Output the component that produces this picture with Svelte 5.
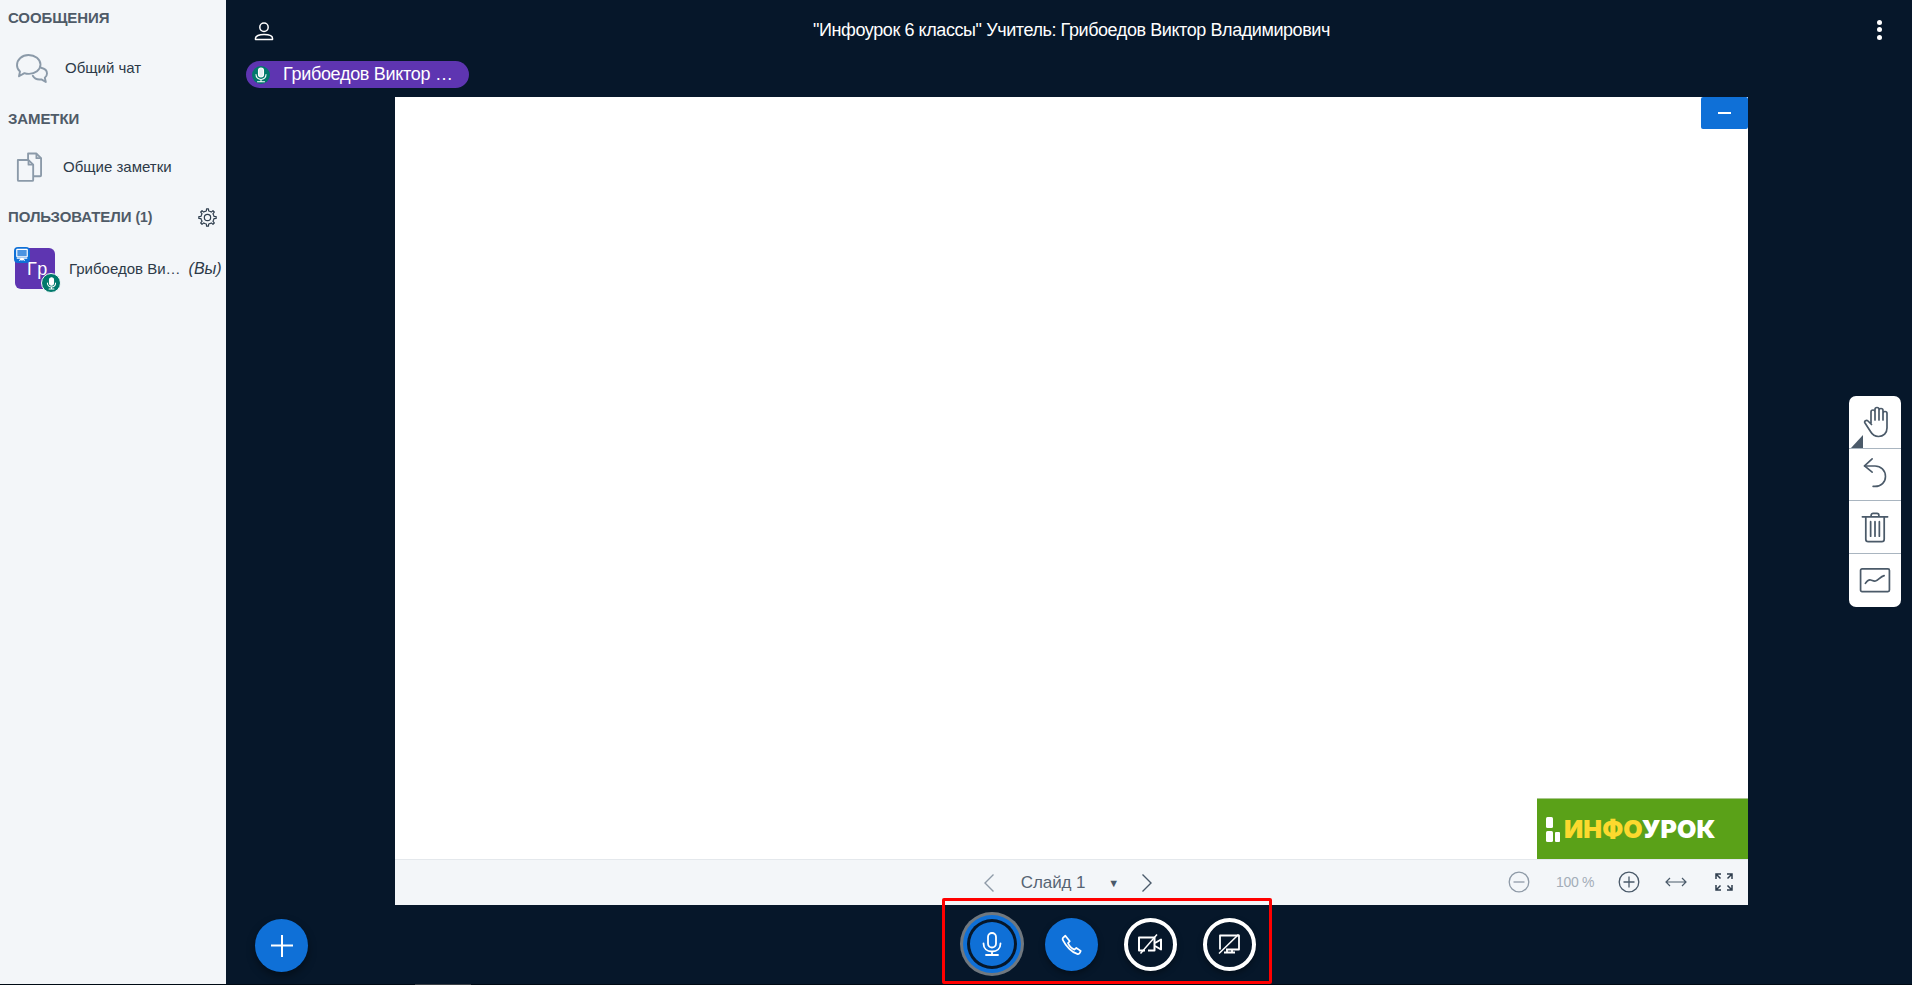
<script>
  function gearPath(cx, cy, ro, ri, n) {
    let d = '';
    const step = (Math.PI * 2) / n;
    for (let i = 0; i < n; i++) {
      const a = i * step - Math.PI / 2;
      const w = step * 0.17;
      const pts = [
        [ri, a - step / 2 + w * 0.3],
        [ri, a - w * 1.35],
        [ro, a - w * 0.8],
        [ro, a + w * 0.8],
        [ri, a + w * 1.35]
      ];
      for (const [r, t] of pts) {
        const x = (cx + r * Math.cos(t)).toFixed(2);
        const y = (cy + r * Math.sin(t)).toFixed(2);
        d += (d ? 'L' : 'M') + x + ' ' + y;
      }
    }
    return d + 'Z';
  }
  const gear = gearPath(12, 12, 11, 8.3, 8);
</script>

<div class="app">
  <aside class="side">
    <h2 class="head first">СООБЩЕНИЯ</h2>
    <div class="item chat">
      <svg class="ic chat-ic" viewBox="0 0 32 32" width="32" height="32" fill="none" stroke="#8b9aa9" stroke-width="1.9" stroke-linejoin="round" stroke-linecap="round">
        <path d="M4 19.500C2 17.800 1 15.600 1 13.200 1 7.500 6 3 12.500 3 19 3 24.500 7.300 24.500 12.600c0 5.400-5.500 9.300-11.500 9.300-1.500 0-3.200-.2-4.600-.8L3 24.200z"/>
        <path d="M25 15.800c3.200.6 6 2.800 6 5.700 0 1.800-.9 3.200-2.200 4.200l1 4.300-4.400-2.600c-3.200.5-7-.8-8.600-3.600"/>
      </svg>
      <span>Общий чат</span>
    </div>
    <h2 class="head notes-head">ЗАМЕТКИ</h2>
    <div class="item notes">
      <svg class="ic" viewBox="0 0 28 32" width="26" height="32" fill="none" stroke="#8b9aa9" stroke-width="2" stroke-linejoin="round">
        <path d="M2 8.500h11.500l5 5V30a1 1 0 0 1-1 1H3a1 1 0 0 1-1-1z"/>
        <path d="M13 8.500V1.500h9l5 5v18.500a1 1 0 0 1-1 1h-7.500"/>
        <path d="M13.500 8.500v5h5M22 1.500v5h5"/>
      </svg>
      <span>Общие заметки</span>
    </div>
    <div class="users-head">
      <h2 class="head">ПОЛЬЗОВАТЕЛИ <small>(1)</small></h2>
      <svg viewBox="0 0 24 24" width="19" height="19" fill="none" stroke="#2f3e4e" stroke-width="1.500" stroke-linejoin="round">
        <path d={gear}/>
        <circle cx="12" cy="12" r="4"/>
      </svg>
    </div>
    <div class="user">
      <div class="avatar">
        <span class="init">Гр</span>
        <span class="presenter">
          <svg viewBox="0 0 16 16" width="14" height="14" fill="none" stroke="#fff" stroke-width="1.300"><rect x="2" y="1.500" width="12" height="8.500" rx=".5" fill="#fff" fill-opacity=".25"/><path d="M2 11.500h12M8 11.500v3M5 14.500l3-3 3 3"/></svg>
        </span>
        <span class="voice">
          <svg viewBox="0 0 16 16" width="13" height="13" fill="none" stroke="#fff" stroke-width="1.300" stroke-linecap="round"><rect x="5.500" y="1" width="5" height="9" rx="2.500" fill="#fff"/><path d="M3 7.500c0 3 2.200 4.800 5 4.800s5-1.800 5-4.800M8 12.300v2M5 14.700h6"/></svg>
        </span>
      </div>
      <span class="uname">Грибоедов Ви…</span>
      <em>(Вы)</em>
    </div>
  </aside>

  <main class="main">
    <header class="top">
      <svg class="person" viewBox="0 0 20 20" width="20" height="20" fill="none" stroke="#fff" stroke-width="1.500" stroke-linejoin="round">
        <circle cx="10" cy="6.300" r="4.200"/>
        <path d="M1.500 18.500v-1.200c0-2.400 3.600-3.800 8.500-3.800s8.500 1.400 8.500 3.800v1.200z"/>
      </svg>
      <div class="title">"Инфоурок 6 классы" Учитель: Грибоедов Виктор Владимирович</div>
      <div class="dots"><i></i><i></i><i></i></div>
    </header>
    <div class="talkers">
      <div class="talker">
        <span class="tmic">
          <svg viewBox="0 0 16 16" width="16" height="16" fill="none" stroke="#fff" stroke-width="1.100" stroke-linecap="round"><rect x="5.500" y="1" width="5" height="9" rx="2.500" fill="#dfeef0"/><path d="M3 7.500c0 3.200 2.200 5 5 5s5-1.800 5-5M8 12.500v2M4.500 14.800h7"/></svg>
        </span>
        <span>Грибоедов Виктор …</span>
      </div>
    </div>

    <section class="stage">
      <div class="slide">
        <button class="min" aria-label="Свернуть"><i></i></button>
        <div class="canvas">
          <div class="logo">
            <svg viewBox="0 0 14 25" width="14" height="25" fill="#fff"><rect x="0" y="0" width="7" height="11" rx="1.500"/><rect x="0" y="14" width="7" height="11" rx="1.500"/><rect x="9" y="15" width="5" height="10" rx="1"/></svg>
            <span class="lg"><b class="y">ИНФО</b><b>УРОК</b></span>
          </div>
        </div>
        <div class="bar">
          <div class="pager">
            <svg viewBox="0 0 14 20" width="14" height="20" fill="none" stroke="#8e9aa7" stroke-width="1.400"><path d="M11.500 1.500 3 10l8.500 8.500"/></svg>
            <span class="sl">Слайд 1</span>
            <span class="caret">▼</span>
            <svg viewBox="0 0 14 20" width="14" height="20" fill="none" stroke="#4a5a6a" stroke-width="1.400"><path d="M2.500 1.500 11 10l-8.500 8.500"/></svg>
          </div>
          <div class="zoomc">
            <svg viewBox="0 0 22 22" width="22" height="22" fill="none" stroke="#8e9aa7" stroke-width="1.300"><circle cx="11" cy="11" r="9.800"/><path d="M5.500 11h11"/></svg>
            <span class="pct">100 %</span>
            <svg viewBox="0 0 22 22" width="22" height="22" fill="none" stroke="#4a5a6a" stroke-width="1.300"><circle cx="11" cy="11" r="9.800"/><path d="M5.500 11h11M11 5.500v11"/></svg>
            <svg class="fit" viewBox="0 0 22 12" width="22" height="12" fill="none" stroke="#4a5a6a" stroke-width="1.200"><path d="M1 6h20M5 2 1 6l4 4M17 2l4 4-4 4"/></svg>
            <svg viewBox="0 0 20 20" width="20" height="20" fill="none" stroke="#2f3e4e" stroke-width="1.500"><path d="M2 7V2h5M2 2l4.500 4.500M18 7V2h-5M18 2l-4.500 4.500M2 13v5h5M2 18l4.500-4.500M18 13v5h-5M18 18l-4.500-4.500"/></svg>
          </div>
        </div>
      </div>
    </section>

    <footer class="actions">
      <button class="plus" aria-label="Добавить">
        <svg viewBox="0 0 24 24" width="24" height="24" stroke="#fff" stroke-width="2"><path d="M12 1v22M1 11.500h22"/></svg>
      </button>
      <div class="controls">
        <button class="rb blue active" aria-label="Микрофон">
          <svg viewBox="0 0 24 24" width="24" height="24" fill="none" stroke="#fff" stroke-width="1.800" stroke-linecap="round"><rect x="8" y="1" width="8" height="14.500" rx="4"/><path d="M3.500 11.500c0 5 3.500 8 8.500 8s8.500-3 8.500-8M12 19.500V23M6 23h12"/></svg>
        </button>
        <button class="rb blue" aria-label="Звонок">
          <svg viewBox="0 0 24 24" width="21" height="21" fill="none" stroke="#fff" stroke-width="2" stroke-linejoin="round"><path d="M5 2 2.500 4.200c-.8.8-.8 2 0 3.300C4 10.500 6.500 14 9.500 17c3 3 6.500 5 9 5.800 1.300.4 2.400-.2 3-1.200l1-2.300-5-3.300-2.300 1.800c-2.500-1-6-4.700-7.200-7.300l2-2.200z" /></svg>
        </button>
        <button class="rb ghost" aria-label="Камера">
          <svg viewBox="0 0 24 20" width="24" height="20" fill="none" stroke="#fff" stroke-width="2" stroke-linejoin="round"><path d="M7 16.500H1V3.500h15.500v13H10"/><path d="M17 9l6-3.500v10L17 12"/><path d="M2.500 19.500 19 .5" stroke-width="1.500"/></svg>
        </button>
        <button class="rb ghost" aria-label="Экран">
          <svg viewBox="0 0 22 20" width="22" height="20" fill="none" stroke="#fff" stroke-width="1.800" stroke-linejoin="round"><path d="M2 15.500V1.500h19v14H8"/><path d="M1 19.500 20.500 .5" stroke-width="1.500"/><path d="M6 18.500h11M9 15.500v3M14 15.500v3"/></svg>
        </button>
      </div>
    </footer>

    <div class="tools">
      <div class="tool">
        <svg class="hand" viewBox="0 0 28 32" width="29" height="32" fill="none" stroke="#4b5a69" stroke-width="1.700" stroke-linecap="round" stroke-linejoin="round"><path d="M7.500 17V6a2 2 0 0 1 4 0v8M11.500 14V3.500a2 2 0 0 1 4 0V14M15.500 14V4.500a2 2 0 0 1 4 0V14M19.500 14V7.500a2 2 0 0 1 4 0V22c0 5-3.500 8.500-8.500 8.500-3.500 0-6-1.500-8-5l-5.500-8.500c-1.200-2 1.500-3.500 3-2l3.500 3.500"/></svg>
        <i class="corner"></i>
      </div>
      <div class="tool">
        <svg viewBox="0 0 26 42" width="26" height="40" fill="none" stroke="#4b5a69" stroke-width="1.700" stroke-linecap="round" stroke-linejoin="round"><path d="M10 4 2 11.500 10 18"/><path d="M2 11.500h11c6 0 11 4.500 11 11 0 6-4.500 10.500-11 10.500h-2"/></svg>
      </div>
      <div class="tool">
        <svg viewBox="0 0 28 32" width="28" height="31" fill="none" stroke="#4b5a69" stroke-width="1.800" stroke-linecap="round" stroke-linejoin="round"><path d="M1 5h26M10 5V3.500C10 2 11 1.500 12 1.500h4c1 0 2 .5 2 2V5"/><path d="M4.500 5v23c0 1.500 1 2.500 2.500 2.500h14c1.500 0 2.500-1 2.500-2.500V5"/><path d="M9.500 10v15M14 10v15M18.500 10v15"/></svg>
      </div>
      <div class="tool">
        <svg viewBox="0 0 32 26" width="32" height="25" fill="none" stroke="#4b5a69" stroke-width="1.800" stroke-linecap="round" stroke-linejoin="round"><rect x="1" y="1" width="30" height="23.500" rx="1.500"/><path d="M6 16c2-3 3.500-4 5.500-3.500s3 1.500 5 1c3-.7 5-4.500 9-5.500"/></svg>
      </div>
    </div>

    <div class="annot"></div>
  </main>
  <div class="edge"><i></i></div>
</div>

<style>
  :global(body) { margin: 0; overflow: hidden; background: #06172a; }
  .app {
    position: relative;
    display: flex; width: 1912px; height: 985px; overflow: hidden;
    font-family: "Liberation Sans", Arial, sans-serif;
  }
  .edge { position: absolute; left: 0; right: 0; bottom: 0; height: 1px; background: #000a14; }
  .edge i { display: block; margin-left: 415px; width: 56px; height: 1px; background: #3a3f45; }
  .side {
    width: 226px; flex: none; background: #f3f6f9; color: #2d3a48;
    padding: 0 0 0 8px; box-sizing: border-box;
  }
  .head { margin: 0; font-size: 15px; line-height: 16px; font-weight: 700; color: #4f5b68; letter-spacing: -.1px; }
  .head small { font-size: 14px; font-weight: 700; }
  .head.first { padding-top: 10px; }
  .item { display: flex; align-items: center; font-size: 15px; color: #2d3a48; }
  .item span { position: relative; top: -1px; }
  .chat { height: 32px; margin-top: 26px; padding-left: 8px; }
  .chat span { margin-left: 17px; }
  .notes-head { margin-top: 27px; }
  .notes { height: 32px; margin-top: 24px; padding-left: 8px; }
  .notes span { margin-left: 21px; }
  .users-head {
    display: flex; align-items: center; justify-content: space-between;
    margin-top: 25px; padding-right: 9px; height: 18px;
  }
  .user { display: flex; align-items: center; margin-top: 22px; padding-left: 7px; font-size: 15px; }
  .avatar {
    position: relative; width: 40px; height: 41px; border-radius: 6px; background: #5e35b1;
    color: #fff; font-size: 18px; line-height: 41px; flex: none;
  }
  .init { position: absolute; left: 12px; top: 1px; letter-spacing: 1.5px; }
  .presenter {
    position: absolute; left: -1px; top: -1px; width: 16px; height: 16px; border-radius: 4px;
    background: #0f70d7; display: flex; align-items: center; justify-content: center;
  }
  .voice {
    position: absolute; right: -6px; bottom: -4px; width: 18px; height: 18px; border-radius: 50%;
    background: #00796b; border: 1px solid #f3f6f9; box-sizing: content-box;
    display: flex; align-items: center; justify-content: center;
  }
  .uname { margin-left: 14px; }
  em { margin-left: 8px; font-style: italic; font-size: 16px; }

  .main { position: relative; flex: 1; min-width: 0; display: flex; flex-direction: column; }
  .top { height: 61px; display: flex; align-items: center; padding: 0 23px 0 28px; box-sizing: border-box; }
  .person { flex: none; }
  .title { flex: 1; text-align: center; color: #fff; font-size: 18px; letter-spacing: -.42px; }
  .dots { display: flex; flex-direction: column; gap: 2.500px; width: 20px; align-items: center; padding-bottom: 2px; }
  .dots i { width: 5px; height: 5px; border-radius: 50%; background: #fff; }
  .talkers { height: 36px; padding-left: 20px; }
  .talker {
    width: 223px; height: 27px; border-radius: 14px; background: #5e35b1; color: #fff;
    display: flex; align-items: center; gap: 13px; padding-left: 6px; box-sizing: border-box;
    font-size: 18px; letter-spacing: -.3px;
  }
  .tmic { width: 18px; height: 18px; border-radius: 50%; background: #00796b; display: flex; align-items: center; justify-content: center; }
  .stage { height: 808px; flex: none; padding-left: 169px; }
  .slide { position: relative; width: 1353px; height: 100%; display: flex; flex-direction: column; background: #fff; }
  .min {
    position: absolute; right: 0; top: 0; width: 47px; height: 32px; border: 0; border-radius: 2px; padding: 0;
    background: #0f70d7; display: flex; align-items: center; justify-content: center;
  }
  .min i { display: block; width: 13px; height: 1.500px; background: #fff; }
  .canvas { flex: 1; display: flex; align-items: flex-end; justify-content: flex-end; }
  .logo {
    width: 211px; height: 61px; background: #5aa118; box-sizing: border-box;
    display: flex; align-items: center; gap: 4px; padding-left: 9px; border-top: 1px solid #a9c78e;
  }
  .lg { font-family: Inter, sans-serif; font-size: 25px; font-weight: 900; color: #fff; line-height: 1; letter-spacing: .1px; }
  .lg b { font-weight: 900; }
  .lg .y { color: #fcd92e; }
  .bar {
    height: 46px; background: #f3f6f9; border-top: 1px solid #e4e8ec; box-sizing: border-box; flex: none;
    position: relative; display: flex; align-items: center; justify-content: center;
  }
  .pager { display: flex; align-items: center; margin-left: -7px; }
  .sl { margin-left: 25px; font-size: 17px; color: #566473; letter-spacing: -.1px; }
  .caret { margin-left: 23px; font-size: 11px; color: #4a5a6a; margin-right: 21px; }
  .zoomc { position: absolute; left: 1113px; top: 11px; display: flex; align-items: center; }
  .pct { margin: 0 24px 0 26px; font-size: 14px; color: #a3adb8; letter-spacing: -.3px; }
  .fit { margin: 0 27px 0 25px; }

  .actions { flex: 1; position: relative; display: flex; justify-content: center; align-items: center; padding-bottom: 2px; }
  .plus {
    position: absolute; left: 29px; top: 14px; width: 53px; height: 53px; border-radius: 50%; border: 0; padding: 0;
    background: #0f70d7; display: flex; align-items: center; justify-content: center;
    box-shadow: 0 4px 8px rgba(0,0,0,.4);
  }
  .controls { display: flex; align-items: center; gap: 26px; margin-left: 83px; }
  button { cursor: pointer; }
  .rb {
    width: 53px; height: 53px; border-radius: 50%; padding: 0; box-sizing: border-box; flex: none;
    display: flex; align-items: center; justify-content: center; border: 0;
    box-shadow: 0 3px 6px rgba(0,0,0,.35);
  }
  .blue { background: #0f70d7; }
  .ghost { background: transparent; border: 4px solid #fff; }
  .controls .active {
    width: 50px; height: 50px; margin: 1.500px;
    box-shadow: inset 0 0 0 3px #06172a, 0 0 0 4px #0f70d7, 0 0 0 7px #70787f;
  }

  .tools {
    position: absolute; left: 1623px; top: 396px; width: 52px; background: #fff; border-radius: 7px;
    display: flex; flex-direction: column; overflow: hidden;
  }
  .tool {
    position: relative; height: 52px; display: flex; align-items: center; justify-content: center;
    border-bottom: 1px solid #a9b5c0;
  }
  .tool:nth-child(2) { height: 51px; }
  .tool:last-child { border-bottom: 0; height: 53px; }
  .hand { margin-left: 4px; }
  .corner {
    position: absolute; left: 2px; bottom: 0; width: 0; height: 0;
    border-style: solid; border-width: 0 0 13px 12px; border-color: transparent transparent #4b5a69 transparent;
  }
  .annot {
    position: absolute; left: 716px; top: 898px; width: 330px; height: 86px;
    border: 3.500px solid #f00; box-sizing: border-box; border-radius: 2px; pointer-events: none;
  }
</style>
